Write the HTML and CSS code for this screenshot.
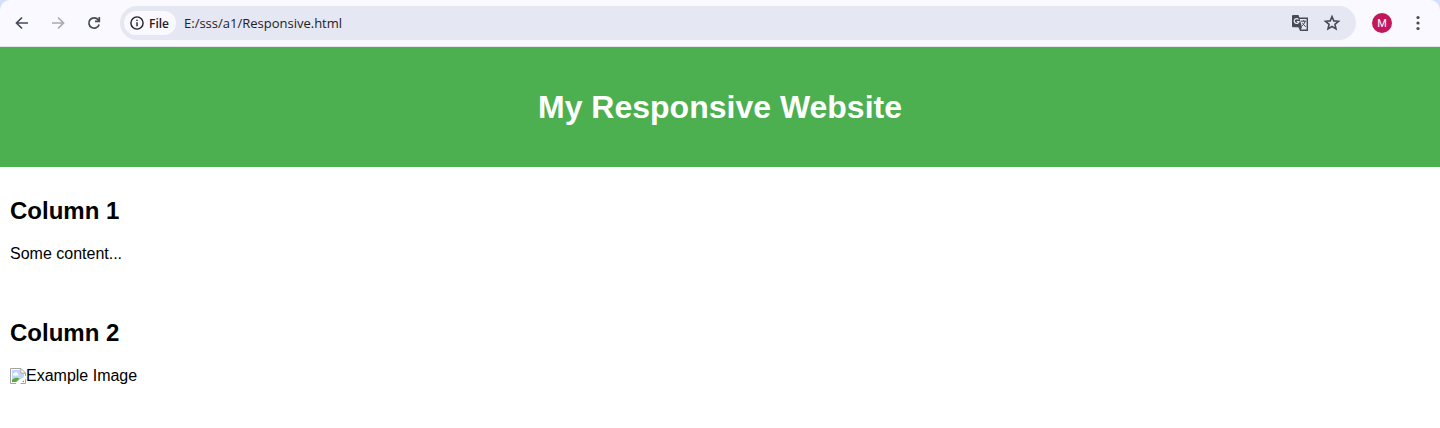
FILE: index.html
```html
<!DOCTYPE html>
<html lang="en">
<head>
<meta charset="utf-8">
<meta name="viewport" content="width=device-width, initial-scale=1">
<title>My Responsive Website</title>
<link rel="stylesheet" href="styles.css">
</head>
<body>
<div class="frame">
  <div class="toolbar">
    <button class="tool" type="button" aria-label="Back">
      <svg width="16" height="16" viewBox="0 0 16 16"><path d="M14 8H3M8 2.5L2.5 8L8 13.5"/></svg>
    </button>
    <button class="tool tool-off" type="button" aria-label="Forward" disabled>
      <svg width="16" height="16" viewBox="0 0 16 16"><path d="M2 8H13M8 2.5L13.5 8L8 13.5"/></svg>
    </button>
    <button class="tool" type="button" aria-label="Reload">
      <svg width="16" height="16" viewBox="0 0 16 16"><path d="M13.1 9.4A5.2 5.2 0 1 1 12.2 4.8L13.2 6.2M13.3 2V6.3H9"/></svg>
    </button>
    <div class="address">
      <button class="chip" type="button">
        <svg width="16" height="16" viewBox="0 0 16 16"><circle cx="8" cy="8" r="6.1"/><path d="M8 7.2V11.2M8 4.7V6.1"/></svg>
        <span>File</span>
      </button>
      <input class="url" type="text" value="E:/sss/a1/Responsive.html" aria-label="Address" spellcheck="false">
      <button class="action" type="button" aria-label="Translate">
        <svg width="18" height="18" viewBox="0 0 18 18">
          <path class="outline" d="M8 4.2H16.3V16.3H9.6L8 13"/>
          <path class="solid" d="M2 1H7.6L11 13.3H2Q1 13.3 1 12.3V2Q1 1 2 1ZM8.8 13.3H11L9.5 16.2Z"/>
          <path class="light" d="M7.5 5.4A2.4 2.4 0 1 0 8 7.5H5.8"/>
          <path class="thin" d="M10 7.2H15.2M12.7 6V7.2M14.2 7.2Q13.5 10 11 12M11.4 8.8Q12.6 11 14.8 12.8"/>
        </svg>
      </button>
      <button class="action" type="button" aria-label="Bookmark this page">
        <svg width="18" height="18" viewBox="0 0 18 18"><path class="star" d="M9 2.6L10.8 6.9L15.5 7.3L11.9 10.3L13 14.9L9 12.5L5 14.9L6.1 10.3L2.5 7.3L7.2 6.9Z"/></svg>
      </button>
    </div>
    <button class="avatar" type="button" aria-label="Profile"><span>M</span></button>
    <button class="menu" type="button" aria-label="Menu">
      <svg width="16" height="16" viewBox="0 0 16 16"><circle cx="8" cy="2.5" r="1.6"/><circle cx="8" cy="8" r="1.6"/><circle cx="8" cy="13.5" r="1.6"/></svg>
    </button>
  </div>
</div>
<header class="banner">
  <h1>My Responsive Website</h1>
</header>
<main>
  <section class="column">
    <h2>Column 1</h2>
    <p>Some content...</p>
  </section>
  <section class="column">
    <h2>Column 2</h2>
    <p class="missing">
      <svg width="16" height="16" viewBox="0 0 16 16" aria-hidden="true">
        <path fill="#fff" d="M.5.5H11L15.5 5V15.5H.5Z"/>
        <path fill="#c3d5f7" d="M2 2H10.5V5.5H14V9L6 14H2Z"/>
        <path fill="#fff" d="M3 6.6Q3 5.2 4.4 5.3Q5 3.6 6.6 4.3Q8 4.6 7.8 6Q8.8 6.4 8.4 7.4H3Z"/>
        <path fill="#55ad36" d="M2 14V12Q5.5 8.2 9.5 10.6L6.2 14ZM10.5 14L14 10.8V14Z"/>
        <path fill="none" stroke="#a3a3a3" d="M6 15.5H.5V.5H11L15.5 5V8M10.8 .8V5.2H15.2M10 15.5H15.5V11"/>
        <path fill="#fff" d="M16 7.5V10.5L10 16H6Z"/>
      </svg>
      <span>Example Image</span>
    </p>
  </section>
</main>
</body>
</html>
```
FILE: styles.css
```css
body {
  margin: 0;
  background: #fff;
  color: #000;
  font: 16px "Liberation Sans", Arial, sans-serif;
}

button {
  display: grid;
  place-items: center;
  flex: none;
  padding: 0;
  border: 0;
  background: none;
  color: #474b57;
}

svg {
  display: block;
  fill: none;
  stroke: currentColor;
}

.frame {
  background: #d3e0fb;
}

.toolbar {
  display: flex;
  align-items: center;
  gap: 8px;
  padding: 6px 8px;
  border-bottom: 1px solid #e2e3ec;
  border-radius: 10px 10px 0 0;
  background: #faf9ff;
}

.tool {
  width: 28px;
  height: 28px;
  stroke-width: 1.7;
}

.tool-off {
  color: #a9a9b0;
}

.address {
  display: flex;
  flex: 1;
  align-items: center;
  gap: 8px;
  height: 34px;
  margin-left: 4px;
  padding: 0 12px 0 4px;
  border-radius: 17px;
  background: #e5e8f3;
}

.chip {
  display: flex;
  align-items: center;
  gap: 4px;
  height: 24px;
  padding: 0 7px 0 5px;
  border-radius: 12px;
  background: #faf9ff;
  color: #1f2024;
  font: 600 12px "Open Sans", "Noto Sans", sans-serif;
  stroke-width: 1.4;
}

.url {
  flex: 1;
  min-width: 0;
  padding: 0;
  border: 0;
  outline: 0;
  background: none;
  color: #1f2024;
  font: 13px "Open Sans", "Noto Sans", sans-serif;
}

.action {
  width: 24px;
  height: 24px;
}

.outline {
  stroke-width: 1.4;
}

.solid {
  fill: currentColor;
  stroke: none;
}

.light {
  stroke: #e5e8f3;
  stroke-width: 1.2;
}

.thin {
  stroke-width: 1;
}

.star {
  stroke-width: 1.6;
}

.avatar {
  width: 20px;
  height: 20px;
  margin-left: 8px;
  border-radius: 50%;
  background: #c2185b;
  color: #fff;
  font: 11px Roboto, sans-serif;
}

.menu {
  width: 28px;
  height: 28px;
  margin-left: 4px;
}

.menu svg {
  fill: currentColor;
  stroke: none;
}

.banner {
  padding: 20px;
  background: #4caf50;
  color: #fff;
  text-align: center;
}

h1 {
  margin: 22px 0;
  font-size: 32px;
  line-height: 36px;
}

.column {
  display: flow-root;
  padding: 10px;
}

h2 {
  margin: 20px 0;
  font-size: 24px;
  line-height: 28px;
}

p {
  margin: 16px 0;
  line-height: 18px;
}

.missing {
  display: flex;
  align-items: center;
}

.missing svg {
  stroke: none;
}
```
